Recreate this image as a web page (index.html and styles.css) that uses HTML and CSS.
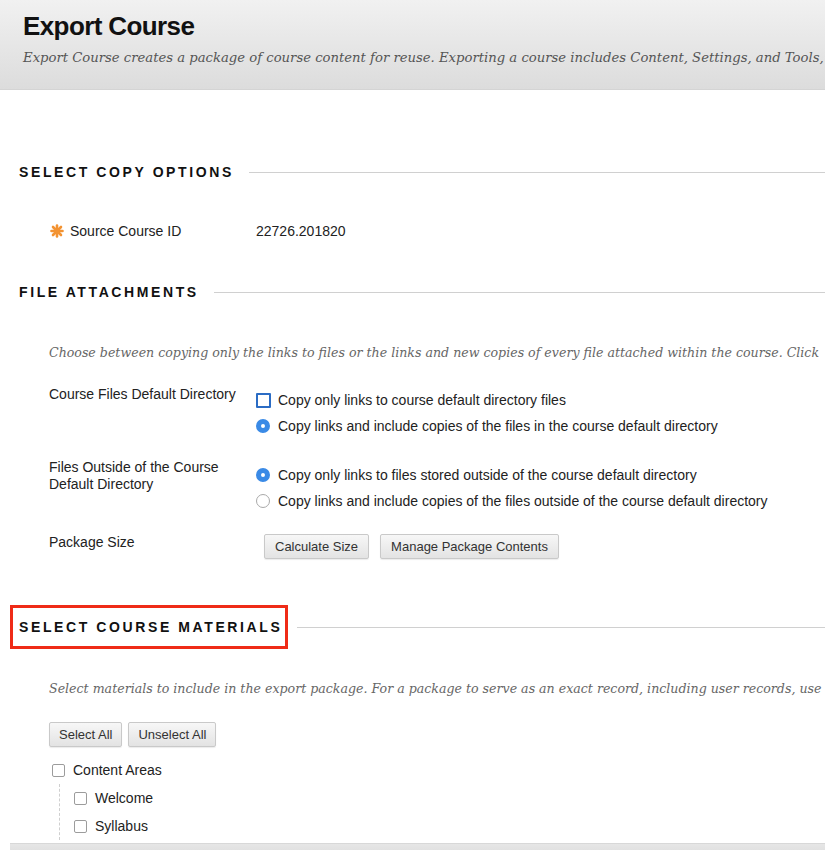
FILE: index.html
```html
<!DOCTYPE html>
<html lang="en">
<head>
    <meta charset="UTF-8">
    <meta name="viewport" content="width=device-width, initial-scale=1.0">
    <title>Export Course</title>
    <link rel="stylesheet" href="styles.css">
</head>
<body>

    <div class="page-header">
        <h1>Export Course</h1>
        <p class="page-desc">Export Course creates a package of course content for reuse. Exporting a course includes Content, Settings, and Tools,</p>
    </div>

    <div class="content">

        <div class="section-title first">
            <h2>Select Copy Options</h2>
            <span class="rule"></span>
        </div>

        <div class="field source-row">
            <div class="field-label">
                <svg class="req" width="14" height="14" viewBox="0 0 14 14">
                    <g stroke="#f39332" stroke-width="2.6" stroke-linecap="round">
                        <line x1="7" y1="1.5" x2="7" y2="12.5"/>
                        <line x1="1.5" y1="7" x2="12.5" y2="7"/>
                        <line x1="3" y1="3" x2="11" y2="11"/>
                        <line x1="11" y1="3" x2="3" y2="11"/>
                    </g>
                </svg>
                Source Course ID
            </div>
            <div class="field-value">22726.201820</div>
        </div>

        <div class="section-title second">
            <h2>File Attachments</h2>
            <span class="rule"></span>
        </div>

        <p class="instructions">Choose between copying only the links to files or the links and new copies of every file attached within the course. Click</p>

        <div class="field option-row first-row">
            <div class="field-label">Course Files Default Directory</div>
            <div class="options">
                <label class="option"><span class="radio focused"></span>Copy only links to course default directory files</label>
                <label class="option"><span class="radio checked"></span>Copy links and include copies of the files in the course default directory</label>
            </div>
        </div>

        <div class="field option-row">
            <div class="field-label two-line">Files Outside of the Course Default Directory</div>
            <div class="options">
                <label class="option"><span class="radio checked"></span>Copy only links to files stored outside of the course default directory</label>
                <label class="option"><span class="radio"></span>Copy links and include copies of the files outside of the course default directory</label>
            </div>
        </div>

        <div class="field option-row last-row">
            <div class="field-label">Package Size</div>
            <div class="buttons">
                <button type="button" class="btn">Calculate Size</button>
                <button type="button" class="btn">Manage Package Contents</button>
            </div>
        </div>

        <div class="section-title materials">
            <h2><span class="highlight">Select Course Materials</span></h2>
            <span class="rule"></span>
        </div>

        <p class="instructions materials-text">Select materials to include in the export package. For a package to serve as an exact record, including user records, use</p>

        <div class="select-buttons">
            <button type="button" class="btn">Select All</button>
            <button type="button" class="btn">Unselect All</button>
        </div>

        <ul class="tree">
            <li>
                <label class="tree-item"><span class="check"></span>Content Areas</label>
                <ul class="tree-children">
                    <li><label class="tree-item"><span class="check"></span>Welcome</label></li>
                    <li><label class="tree-item"><span class="check"></span>Syllabus</label></li>
                </ul>
            </li>
        </ul>

        <div class="submit-bar"></div>
    </div>

</body>
</html>
```

FILE: styles.css
```css
body {
    margin: 0;
    font-family: "Liberation Sans", Arial, sans-serif;
    font-size: 14px;
    color: #222;
    background: #fff;
    overflow: hidden;
}

.page-header {
    height: 90px;
    box-sizing: border-box;
    padding: 11px 0 0 23px;
    background: linear-gradient(#f1f1f1, #dcdcdc);
    border-bottom: 1px solid #d4d4d4;
    white-space: nowrap;
    overflow: hidden;
}

.page-header h1 {
    margin: 0;
    font-size: 26px;
    line-height: 30px;
    letter-spacing: -0.6px;
    color: #111;
}

.page-desc {
    margin: 7px 0 0;
    font-family: "DejaVu Serif", Georgia, serif;
    font-style: italic;
    font-size: 13.2px;
    line-height: 20px;
    color: #555;
}

.content {
    padding: 0 0 0 19px;
}

.section-title {
    display: flex;
    align-items: center;
    gap: 15px;
    height: 20px;
}

.section-title.first {
    margin-top: 72px;
}

.section-title.second {
    margin-top: 41px;
}

.section-title.materials {
    margin-top: 58px;
}

.section-title h2 {
    margin: 0;
    font-size: 14px;
    line-height: 20px;
    letter-spacing: 2.6px;
    text-transform: uppercase;
    color: #111;
    white-space: nowrap;
}

.section-title .rule {
    flex: 1;
    border-top: 1px solid #d0d0d0;
}

.highlight {
    position: relative;
    display: inline-block;
    line-height: 20px;
}

.highlight::after {
    content: "";
    position: absolute;
    top: -12px;
    bottom: -12px;
    left: -9px;
    right: -6px;
    border: 3px solid #ef2b17;
}

.field {
    display: flex;
    padding-left: 30px;
}

.field-label {
    width: 207px;
    flex-shrink: 0;
    line-height: 20px;
}

.source-row {
    margin-top: 39px;
}

.source-row .field-label {
    display: flex;
    align-items: center;
    gap: 6px;
    padding-left: 1px;
    width: 206px;
}

.field-value {
    line-height: 20px;
}

.instructions {
    margin: 41px 0 0 30px;
    font-family: "DejaVu Serif", Georgia, serif;
    font-style: italic;
    font-size: 12.6px;
    line-height: 20px;
    color: #666;
    white-space: nowrap;
}

.instructions.materials-text {
    margin-top: 42px;
}

.option-row {
    margin-top: 20px;
}

.option-row.first-row {
    margin-top: 21px;
}

.option-row.last-row {
    margin-top: 18px;
}

.field-label.two-line {
    line-height: 17px;
    width: 180px;
    margin-right: 27px;
}

.options {
    margin-top: 3px;
    white-space: nowrap;
}

.option {
    display: flex;
    align-items: center;
    height: 26px;
    gap: 8px;
}

.radio {
    width: 12px;
    height: 12px;
    border: 1px solid #a9a9a9;
    border-radius: 50%;
    background: #fff;
    flex-shrink: 0;
}

.radio.checked {
    width: 4px;
    height: 4px;
    border: 5px solid #3a8ae6;
}

.radio.focused {
    border-radius: 1px;
    border: 2px solid #2b6cc4;
    width: 11px;
    height: 11px;
    margin-right: -1px;
}

.buttons {
    display: flex;
    gap: 11px;
    margin: 2px 0 0 8px;
}

.btn {
    font-family: "Liberation Sans", Arial, sans-serif;
    font-size: 13px;
    color: #333;
    height: 25px;
    padding: 0 9px;
    background: linear-gradient(#f7f7f7, #e3e3e3);
    border: 1px solid #c9c9c9;
    border-radius: 2px;
    box-shadow: 0 1px 1px rgba(0, 0, 0, 0.08);
}

.buttons .btn {
    padding: 0 10px;
}

.select-buttons {
    display: flex;
    gap: 6px;
    margin: 23px 0 0 30px;
}

.tree,
.tree-children {
    list-style: none;
    margin: 0;
    padding: 0;
}

.tree {
    margin: 9px 0 0 33px;
}

.tree-children {
    margin-left: 7px;
    padding-left: 14px;
    border-left: 1px dashed #cfcfcf;
}

.tree-item {
    display: flex;
    align-items: center;
    gap: 8px;
    height: 28px;
}

.check {
    width: 11px;
    height: 11px;
    border: 1px solid #9c9c9c;
    border-radius: 2px;
    background: #fff;
    flex-shrink: 0;
}

.submit-bar {
    margin: 3px 0 0 -9px;
    height: 10px;
    background: linear-gradient(#e6e6e6, #dedede);
    border-top: 1px solid #d8d8d8;
}
```
